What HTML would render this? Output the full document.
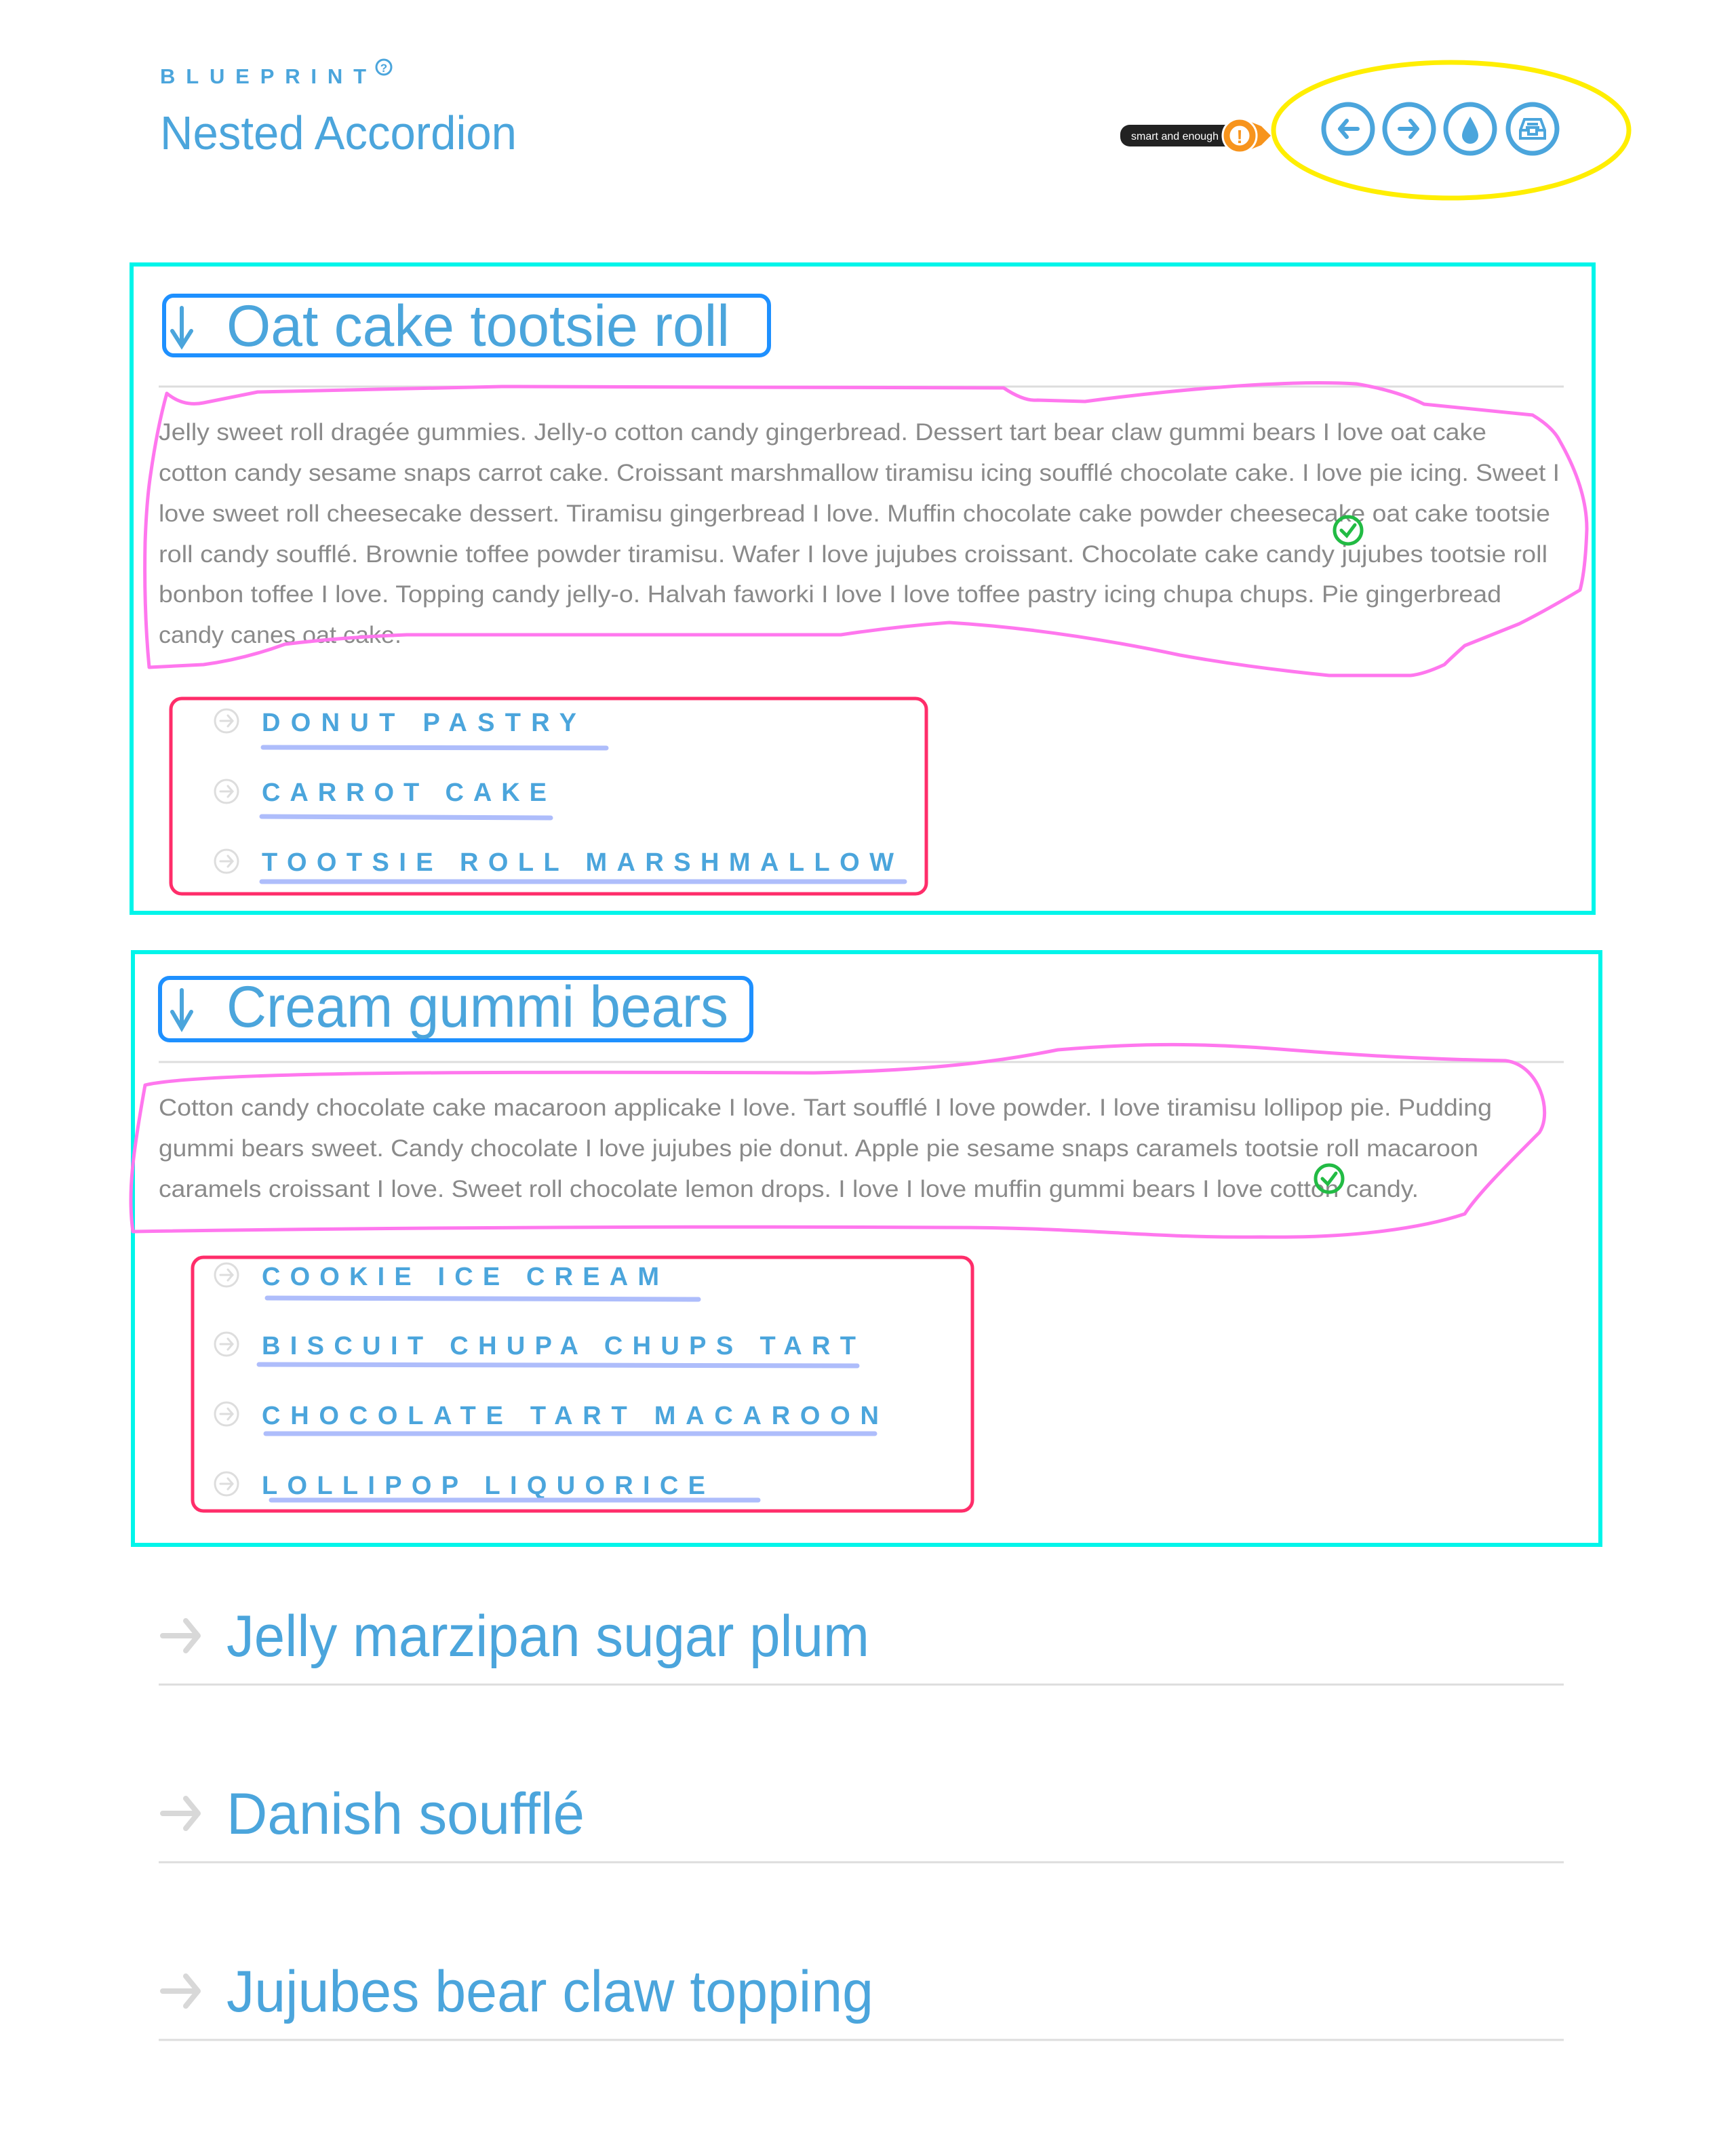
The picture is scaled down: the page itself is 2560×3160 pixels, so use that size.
<!DOCTYPE html>
<html><head><meta charset="utf-8"><style>
html,body{margin:0;padding:0;background:#fff;}
svg{display:block;}
.h{font-family:"Liberation Sans",sans-serif;font-size:86px;fill:#4ba5dc;}
.p{font-family:"Liberation Sans",sans-serif;font-size:35px;fill:#8a8a8a;}
.s{font-family:"Liberation Sans",sans-serif;font-size:38px;font-weight:bold;fill:#4ba5dc;}
.u{stroke:#aebdfb;stroke-width:7;stroke-linecap:round;}
.d{stroke:#dddddd;stroke-width:3;}
</style></head><body>
<svg width="2560" height="3160" viewBox="0 0 2560 3160" xmlns="http://www.w3.org/2000/svg">
<text x="236" y="123" font-family="Liberation Sans, sans-serif" font-size="31" font-weight="bold" fill="#4ba5dc" textLength="304" lengthAdjust="spacing">BLUEPRINT</text>
<circle cx="566" cy="99" r="11" fill="none" stroke="#4ba5dc" stroke-width="3"/>
<text x="566" y="106" font-family="Liberation Sans, sans-serif" font-size="17" font-weight="bold" fill="#4ba5dc" text-anchor="middle">?</text>
<text x="236" y="220" font-family="Liberation Sans, sans-serif" font-size="70" fill="#4ba5dc" textLength="526" lengthAdjust="spacingAndGlyphs">Nested Accordion</text>

<rect x="1652" y="184" width="170" height="32" rx="14" fill="#222"/>
<text x="1668" y="206" font-family="Liberation Sans, sans-serif" font-size="16" fill="#fff">smart and enough</text>
<path d="M1840 178 L1860 186 L1874 200 L1860 214 L1840 222 Z" fill="#f7941d"/>
<circle cx="1828" cy="200" r="25" fill="#f7941d" stroke="#fff" stroke-width="3"/>
<circle cx="1828" cy="200" r="16" fill="#fff" stroke="#f7941d" stroke-width="3"/>
<text x="1828" y="211" font-family="Liberation Sans, sans-serif" font-size="28" font-weight="bold" fill="#f7941d" text-anchor="middle">!</text>

<g fill="none" stroke="#4ba5dc" stroke-width="7">
<circle cx="1988" cy="190" r="36"/><circle cx="2078" cy="190" r="36"/><circle cx="2168" cy="190" r="36"/><circle cx="2260" cy="190" r="36"/>
</g>
<g fill="none" stroke="#4ba5dc" stroke-width="6" stroke-linecap="round" stroke-linejoin="round">
<path d="M2002 190 H1976 M1986 178 L1976 190 L1986 202"/>
<path d="M2064 190 H2090 M2080 178 L2090 190 L2080 202"/>
</g>
<path d="M2168 172 C2160 186 2156 194 2156 200 A12 12 0 0 0 2180 200 C2180 194 2176 186 2168 172 Z" fill="#4ba5dc"/>
<g fill="none" stroke="#4ba5dc" stroke-width="4">
<path d="M2248 176 H2272 L2278 192 V204 H2242 V192 Z"/><path d="M2242 192 H2254 V198 H2266 V192 H2278"/><path d="M2252 183 H2268 M2250 188 H2270"/>
</g>
<ellipse cx="2140" cy="192" rx="262" ry="100" fill="none" stroke="#ffee00" stroke-width="7"/>

<rect x="194" y="390" width="2156" height="956" fill="none" stroke="#00f5ea" stroke-width="6"/>
<rect x="242" y="436" width="892" height="88" rx="14" fill="none" stroke="#1e90ff" stroke-width="6"/>
<g stroke="#4ba5dc" stroke-width="6" fill="none" stroke-linecap="round"><path d="M268 454 V508 M254 488 L268 510 L282 488"/></g>
<text class="h" x="334" y="510" textLength="742" lengthAdjust="spacingAndGlyphs">Oat cake tootsie roll</text>
<line class="d" x1="234" y1="570" x2="2306" y2="570"/>
<text class="p" x="234" y="649" textLength="1958" lengthAdjust="spacingAndGlyphs">Jelly sweet roll dragée gummies. Jelly-o cotton candy gingerbread. Dessert tart bear claw gummi bears I love oat cake</text>
<text class="p" x="234" y="709" textLength="2066" lengthAdjust="spacingAndGlyphs">cotton candy sesame snaps carrot cake. Croissant marshmallow tiramisu icing soufflé chocolate cake. I love pie icing. Sweet I</text>
<text class="p" x="234" y="769" textLength="2052" lengthAdjust="spacingAndGlyphs">love sweet roll cheesecake dessert. Tiramisu gingerbread I love. Muffin chocolate cake powder cheesecake oat cake tootsie</text>
<text class="p" x="234" y="829" textLength="2048" lengthAdjust="spacingAndGlyphs">roll candy soufflé. Brownie toffee powder tiramisu. Wafer I love jujubes croissant. Chocolate cake candy jujubes tootsie roll</text>
<text class="p" x="234" y="888" textLength="1980" lengthAdjust="spacingAndGlyphs">bonbon toffee I love. Topping candy jelly-o. Halvah faworki I love I love toffee pastry icing chupa chups. Pie gingerbread</text>
<text class="p" x="234" y="948" textLength="358" lengthAdjust="spacingAndGlyphs">candy canes oat cake.</text>

<g fill="none" stroke="#dddddd" stroke-width="3" stroke-linecap="round">
<circle cx="334" cy="1063" r="17"/><path d="M325 1063 H343 M336 1055 L343 1063 L336 1071"/>
<circle cx="334" cy="1167" r="17"/><path d="M325 1167 H343 M336 1159 L343 1167 L336 1175"/>
<circle cx="334" cy="1270" r="17"/><path d="M325 1270 H343 M336 1262 L343 1270 L336 1278"/>
<circle cx="334" cy="1880" r="17"/><path d="M325 1880 H343 M336 1872 L343 1880 L336 1888"/>
<circle cx="334" cy="1982" r="17"/><path d="M325 1982 H343 M336 1974 L343 1982 L336 1990"/>
<circle cx="334" cy="2085" r="17"/><path d="M325 2085 H343 M336 2077 L343 2085 L336 2093"/>
<circle cx="334" cy="2188" r="17"/><path d="M325 2188 H343 M336 2180 L343 2188 L336 2196"/>
</g>
<text class="s" x="386" y="1078" textLength="464" lengthAdjust="spacing">DONUT PASTRY</text>
<text class="s" x="386" y="1181" textLength="420" lengthAdjust="spacing">CARROT CAKE</text>
<text class="s" x="386" y="1284" textLength="932" lengthAdjust="spacing">TOOTSIE ROLL MARSHMALLOW</text>
<line class="u" x1="388" y1="1102" x2="894" y2="1103"/>
<line class="u" x1="386" y1="1204" x2="812" y2="1206"/>
<line class="u" x1="386" y1="1300" x2="1334" y2="1300"/>
<rect x="252" y="1030" width="1114" height="288" rx="16" fill="none" stroke="#ff2d6a" stroke-width="5"/>

<rect x="196" y="1404" width="2164" height="874" fill="none" stroke="#00f5ea" stroke-width="6"/>
<rect x="236" y="1442" width="872" height="92" rx="14" fill="none" stroke="#1e90ff" stroke-width="6"/>
<g stroke="#4ba5dc" stroke-width="6" fill="none" stroke-linecap="round"><path d="M268 1460 V1514 M254 1492 L268 1516 L282 1492"/></g>
<text class="h" x="334" y="1514" textLength="740" lengthAdjust="spacingAndGlyphs">Cream gummi bears</text>
<line class="d" x1="234" y1="1566" x2="2306" y2="1566"/>
<text class="p" x="234" y="1645" textLength="1966" lengthAdjust="spacingAndGlyphs">Cotton candy chocolate cake macaroon applicake I love. Tart soufflé I love powder. I love tiramisu lollipop pie. Pudding</text>
<text class="p" x="234" y="1705" textLength="1946" lengthAdjust="spacingAndGlyphs">gummi bears sweet. Candy chocolate I love jujubes pie donut. Apple pie sesame snaps caramels tootsie roll macaroon</text>
<text class="p" x="234" y="1765" textLength="1858" lengthAdjust="spacingAndGlyphs">caramels croissant I love. Sweet roll chocolate lemon drops. I love I love muffin gummi bears I love cotton candy.</text>
<text class="s" x="386" y="1895" textLength="586" lengthAdjust="spacing">COOKIE ICE CREAM</text>
<text class="s" x="386" y="1997" textLength="876" lengthAdjust="spacing">BISCUIT CHUPA CHUPS TART</text>
<text class="s" x="386" y="2100" textLength="910" lengthAdjust="spacing">CHOCOLATE TART MACAROON</text>
<text class="s" x="386" y="2203" textLength="654" lengthAdjust="spacing">LOLLIPOP LIQUORICE</text>
<line class="u" x1="394" y1="1914" x2="1030" y2="1916"/>
<line class="u" x1="382" y1="2012" x2="1264" y2="2014"/>
<line class="u" x1="392" y1="2114" x2="1290" y2="2114"/>
<line class="u" x1="400" y1="2212" x2="1118" y2="2212"/>
<rect x="284" y="1854" width="1150" height="374" rx="16" fill="none" stroke="#ff2d6a" stroke-width="5"/>

<g stroke="#d8d8d8" stroke-width="8" fill="none" stroke-linecap="round" stroke-linejoin="round">
<path d="M240 2412 H290 M274 2390 L292 2412 L274 2434"/>
<path d="M240 2674 H290 M274 2652 L292 2674 L274 2696"/>
<path d="M240 2936 H290 M274 2914 L292 2936 L274 2958"/>
</g>
<text class="h" x="334" y="2442" textLength="948" lengthAdjust="spacingAndGlyphs">Jelly marzipan sugar plum</text>
<line class="d" x1="234" y1="2484" x2="2306" y2="2484"/>
<text class="h" x="334" y="2704" textLength="528" lengthAdjust="spacingAndGlyphs">Danish soufflé</text>
<line class="d" x1="234" y1="2746" x2="2306" y2="2746"/>
<text class="h" x="334" y="2966" textLength="954" lengthAdjust="spacingAndGlyphs">Jujubes bear claw topping</text>
<line class="d" x1="234" y1="3008" x2="2306" y2="3008"/>

<g fill="none" stroke="#ff77ee" stroke-width="5" stroke-linecap="round" stroke-linejoin="round">
<path d="M246 580 Q270 600 300 594 Q340 586 380 578 L740 570 L1480 572 Q1510 592 1530 590 L1600 592 Q1660 584 1720 578 Q1900 560 2000 566 Q2060 576 2100 596 L2260 612 Q2290 630 2300 650 Q2340 720 2340 780 Q2338 840 2330 870 Q2280 900 2240 920 Q2180 944 2160 952 Q2140 970 2130 980 Q2100 994 2080 996 L1960 996 Q1840 984 1740 966 Q1560 928 1400 918 Q1320 924 1240 936 L600 936 Q500 940 420 950 Q360 972 300 980 L220 984 Q212 900 214 800 Q216 740 222 700 Q232 630 246 580"/>
<path d="M214 1600 C300 1580 700 1580 1200 1582 C1400 1578 1500 1560 1560 1548 C1700 1536 1800 1540 1900 1548 C2000 1556 2100 1562 2220 1564 C2270 1570 2290 1640 2270 1670 C2220 1720 2180 1760 2160 1790 C2100 1810 2000 1826 1860 1824 C1700 1826 1600 1810 1400 1810 C1000 1808 600 1810 196 1816 C188 1760 196 1700 214 1600"/>
</g>
<g fill="none" stroke="#22bb44" stroke-width="5" stroke-linecap="round">
<circle cx="1988" cy="782" r="20"/><path d="M1978 782 L1986 790 L1998 774"/>
<circle cx="1960" cy="1738" r="20"/><path d="M1950 1738 L1958 1746 L1970 1730"/>
</g>
</svg>
</body></html>
